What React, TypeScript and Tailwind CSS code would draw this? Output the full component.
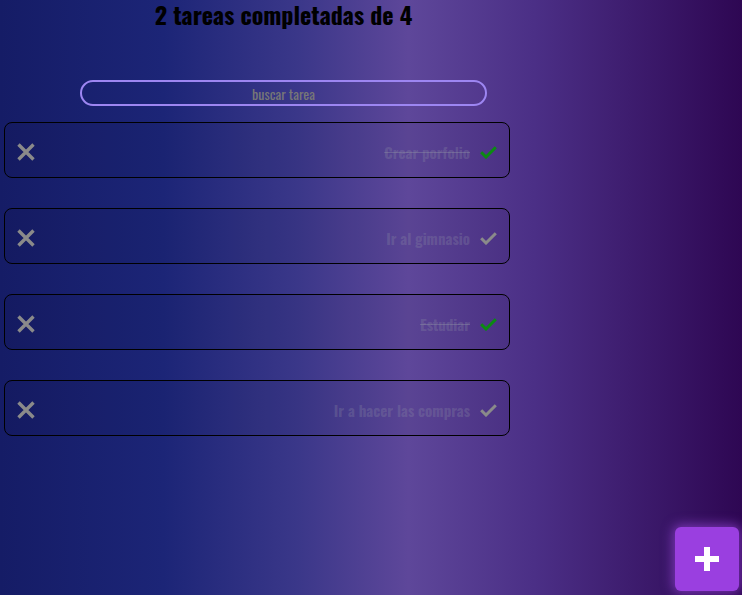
import React from "react";

const tasks = [
  { text: "Crear porfolio", done: true },
  { text: "Ir al gimnasio", done: false },
  { text: "Estudiar", done: true },
  { text: "Ir a hacer las compras", done: false },
];

const font = { fontFamily: '"Oswald", "Liberation Sans Narrow", "DejaVu Sans Condensed", "Roboto", sans-serif' };

function XIcon() {
  return (
    <svg width="18" height="18" viewBox="0 0 18 18" className="shrink-0">
      <path d="M1.5 1.5 L16.5 16.5 M16.5 1.5 L1.5 16.5" stroke="#8a8a8a" strokeWidth="3.4" strokeLinecap="butt" />
    </svg>
  );
}

function CheckIcon({ done }: { done: boolean }) {
  return (
    <svg width="17" height="13" viewBox="0 0 17 13" className="shrink-0">
      <path d="M1.2 6.2 L6 11 L15.8 1.2" stroke={done ? "#0b8a12" : "#8a8a8a"} strokeWidth="3" fill="none" />
    </svg>
  );
}

export default function App() {
  return (
    <div
      className="relative w-[742px] h-[595px] overflow-hidden"
      style={{
        ...font,
        background:
          "linear-gradient(90deg, #151c66 0%, #1c2577 22%, #3a3789 40%, #5e479a 55%, #4b2f86 72%, #2e0753 100%)",
      }}
    >
      <div className="flex flex-col w-[567px]">
        <h1 className="h-[34px] pb-[6px] flex items-center justify-center text-[24px] leading-[28px] font-bold text-black">
          2 tareas completadas de 4
        </h1>
        <div className="flex justify-center mt-[46px]">
          <div className="w-[407px] h-[26px] rounded-full border-2 border-[#9d86f2] flex items-center justify-center text-[14px] font-normal text-[#777777]">
            buscar tarea
          </div>
        </div>
        <ul className="flex flex-col gap-[30px] mt-[16px] pl-[4px]">
          {tasks.map((t) => (
            <li
              key={t.text}
              className="w-[506px] h-[56px] rounded-[8px] border border-black bg-[rgba(0,0,0,0.04)] flex items-center pl-[12px] pr-[12px] pt-[4px]"
            >
              <XIcon />
              <span
                className={
                  "ml-auto text-[15px] font-bold text-[rgba(140,140,165,0.3)] " +
                  (t.done ? "line-through decoration-[rgba(140,140,165,0.45)]" : "")
                }
              >
                {t.text}
              </span>
              <span className="ml-[10px] flex items-center">
                <CheckIcon done={t.done} />
              </span>
            </li>
          ))}
        </ul>
      </div>
      <button
        className="absolute left-[675px] top-[527px] w-[64px] h-[64px] rounded-[6px] bg-[#9a3fe0] flex items-center justify-center shadow-[0_0_12px_2px_rgba(170,80,240,0.6)]"
      >
        <svg width="26" height="26" viewBox="0 0 26 26">
          <path d="M13 1 V25 M1 13 H25" stroke="#ffffff" strokeWidth="6" />
        </svg>
      </button>
    </div>
  );
}
